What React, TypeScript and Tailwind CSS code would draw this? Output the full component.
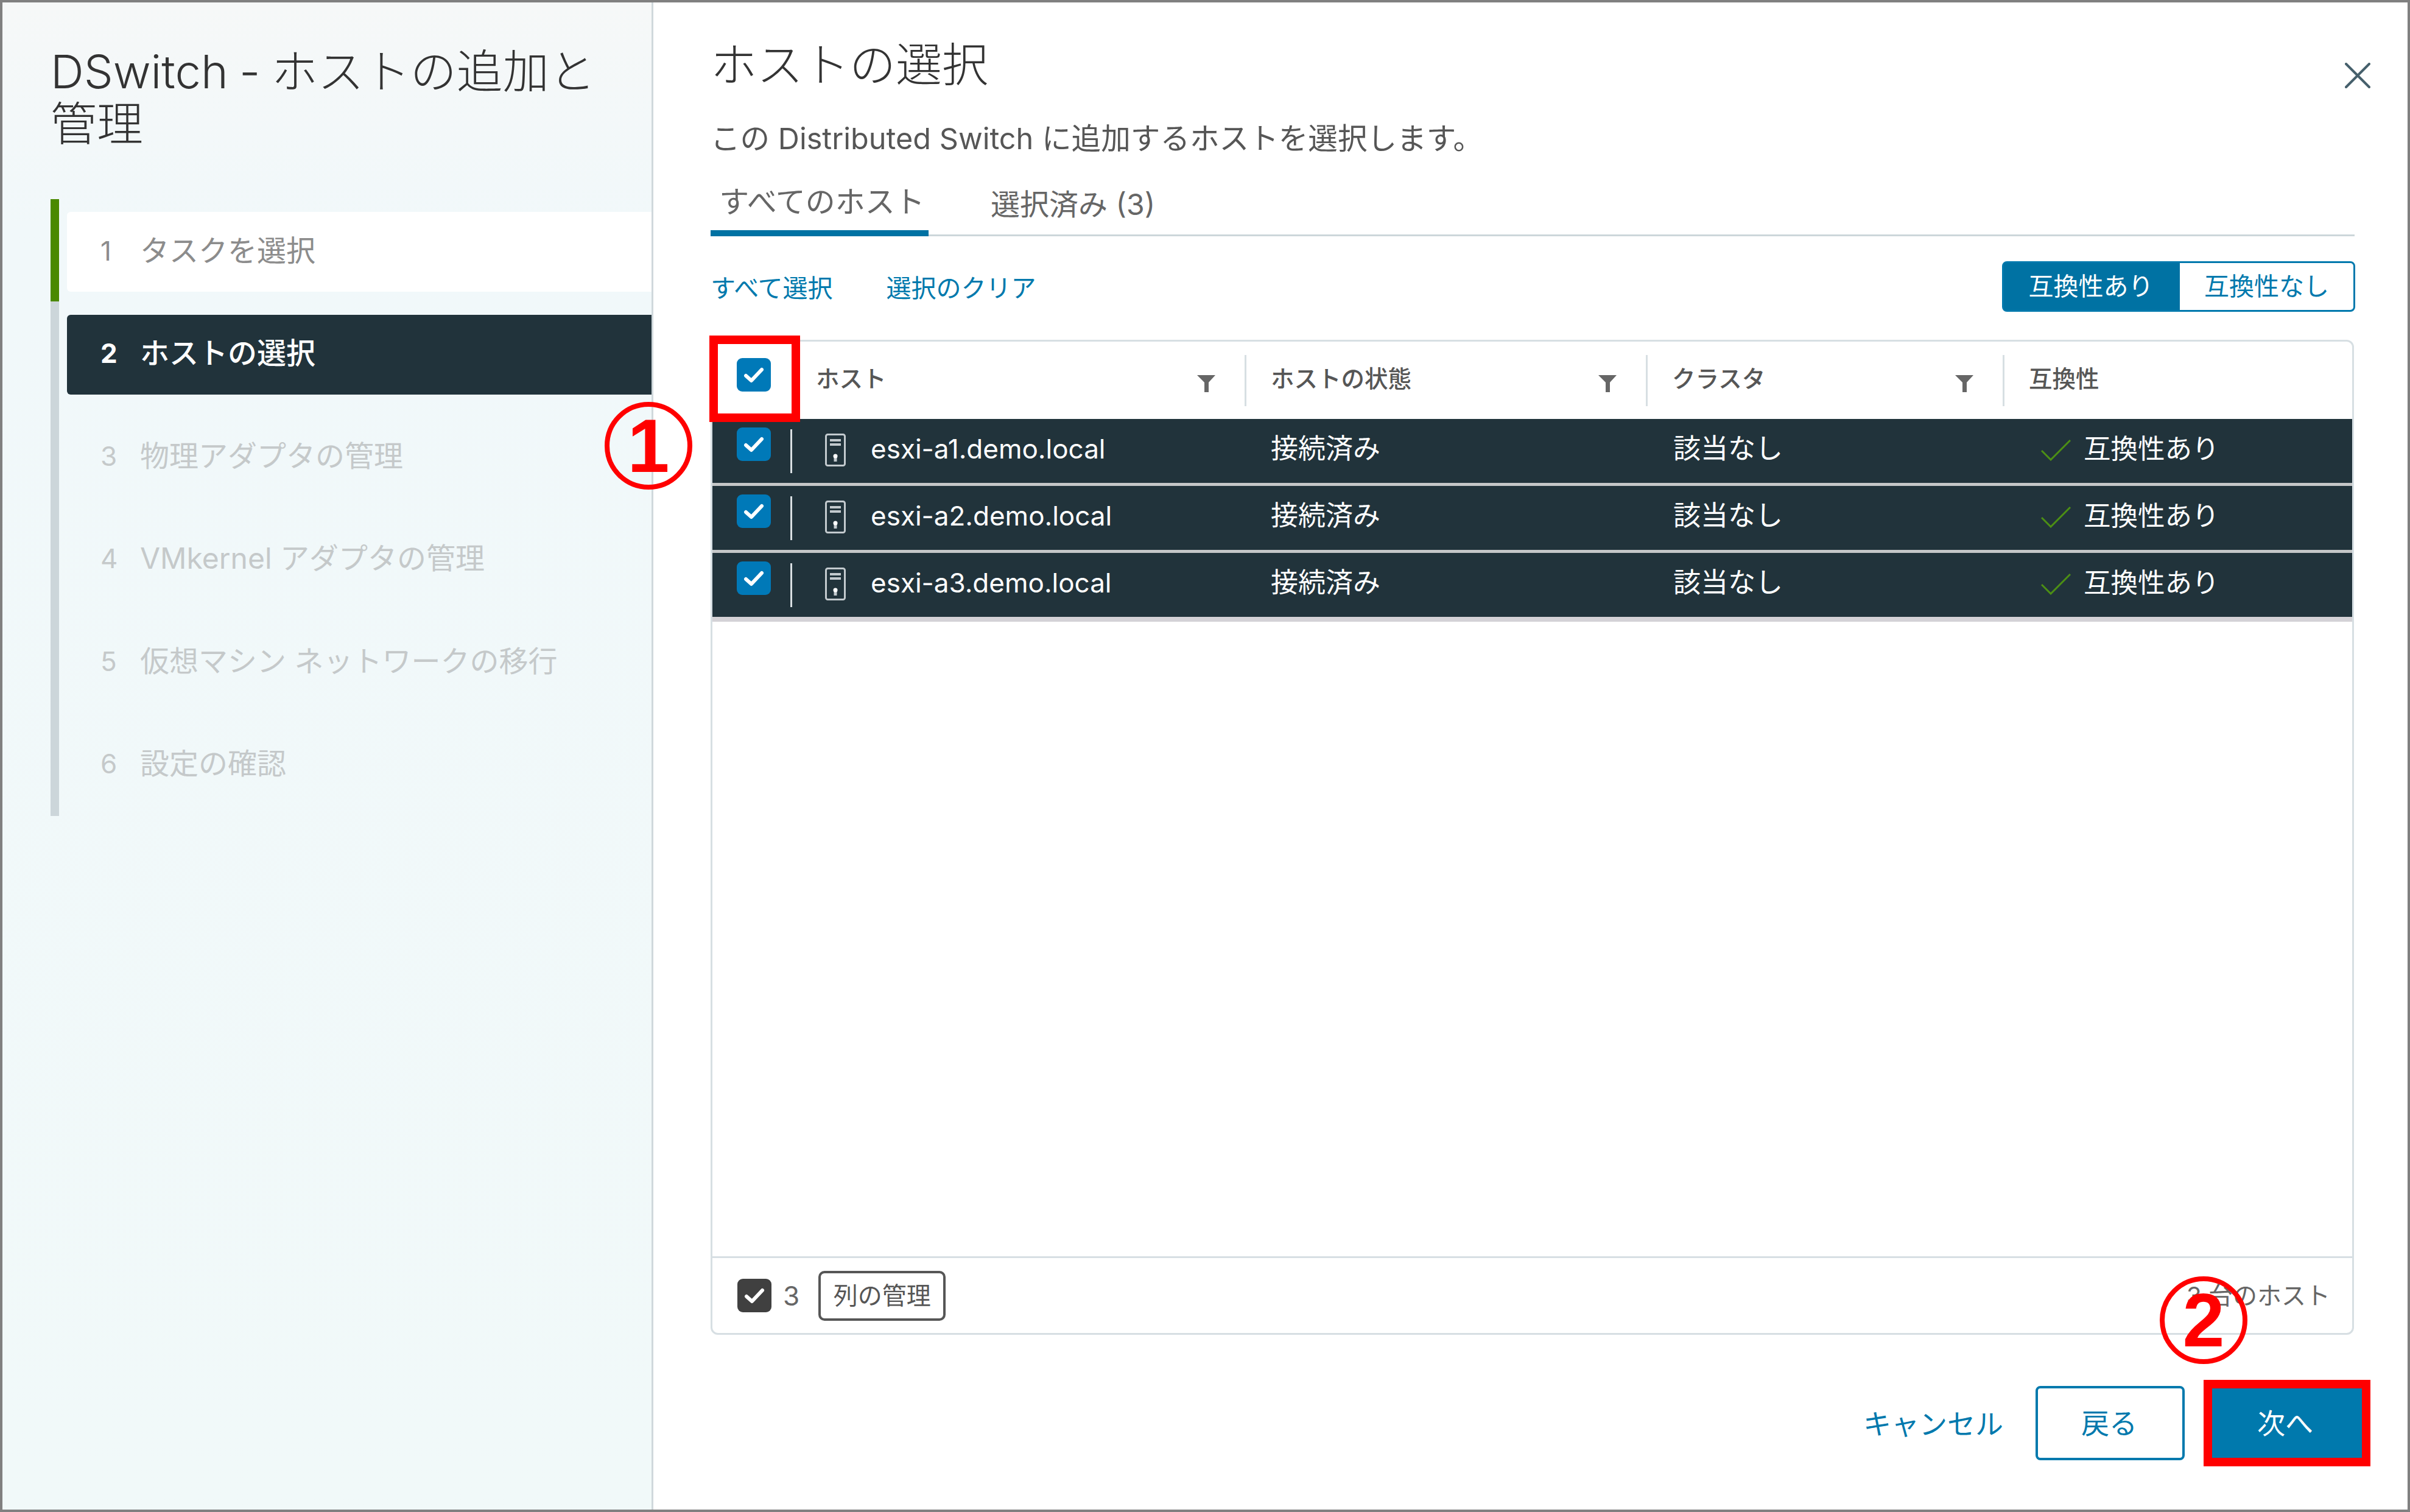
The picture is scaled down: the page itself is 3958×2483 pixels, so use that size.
import React from 'react';

const steps = [
  { n: '1', label: 'タスクを選択', state: 'done' },
  { n: '2', label: 'ホストの選択', state: 'active' },
  { n: '3', label: '物理アダプタの管理', state: 'todo' },
  { n: '4', label: 'VMkernel アダプタの管理', state: 'todo' },
  { n: '5', label: '仮想マシン ネットワークの移行', state: 'todo' },
  { n: '6', label: '設定の確認', state: 'todo' },
];

const hosts = ['esxi-a1.demo.local', 'esxi-a2.demo.local', 'esxi-a3.demo.local'];

const CheckBox = ({ dark = false }: { dark?: boolean }) => (
  <span className={`flex h-[55px] w-[56px] shrink-0 items-center justify-center rounded-[9px] ${dark ? 'bg-[#404040]' : 'bg-[#0079b8]'}`}>
    <svg viewBox="0 0 34 28" className="h-[28px] w-[34px]" fill="none" stroke="#ffffff" strokeWidth="6" strokeLinecap="round" strokeLinejoin="round">
      <path d="M4 15 L13 23 L30 5" />
    </svg>
  </span>
);

const FilterIcon = () => (
  <svg viewBox="0 0 30 28" className="h-[28px] w-[30px]" fill="#666666">
    <path d="M0 0 H30 L19 12 V28 H12 V12 Z" />
  </svg>
);

const ServerIcon = () => (
  <svg viewBox="0 0 34 54" className="h-[54px] w-[34px] shrink-0" fill="none" stroke="#c3cace" strokeWidth="3">
    <rect x="1.5" y="1.5" width="31" height="51" rx="3" />
    <path d="M8 11 H26 M8 18 H26" strokeWidth="4" />
    <path d="M17 46 V37" strokeWidth="5" />
    <circle cx="17" cy="37" r="3.5" fill="#ffffff" stroke="none" />
  </svg>
);

const HeaderCell = ({ label, filter, first }: { label: string; filter?: boolean; first?: boolean }) => (
  <div className={`flex h-[84px] items-center justify-between text-[38.5px] font-medium text-[#565656] ${first ? 'pr-[48px]' : 'border-l-[3px] border-[#d7dfe3] pl-[40px] pr-[48px]'}`}>
    <span className="pb-[4px]">{label}</span>
    {filter && <span className="mt-[10px]"><FilterIcon /></span>}
  </div>
);

const App: React.FC = () => {
  return (
    <div className="relative h-[2483px] w-[3958px] overflow-hidden bg-white font-['Inter','Noto_Sans_CJK_JP',sans-serif]">
      <div className="flex h-full w-full border-[4px] border-[#808080]">
        {/* Left wizard steps */}
        <aside className="flex h-full w-[1069px] shrink-0 flex-col border-r-[3px] border-[#d0d8dc] bg-gradient-to-b from-[#f6f8f8] via-[#f1f8fa] via-[15%] to-[#f1f9f9] pl-[79px] pt-[70px]">
          <h1 className="text-[76px] font-light leading-[86px] text-[#333333] [word-spacing:-3px]">DSwitch - ホストの追加と<br />管理</h1>
          <div className="mt-[81px] flex h-[1013px]">
            <div className="flex w-[14px] shrink-0 flex-col bg-[#ccd6da]">
              <div className="h-[168px] bg-[#4a8900]" />
            </div>
            <ol className="ml-[13px] flex flex-1 flex-col gap-[37.6px] pt-[21px]">
              {steps.map((s) => (
                <li
                  key={s.n}
                  className={`flex h-[131px] items-center rounded-l-[6px] pb-[4px] pl-[55px] text-[48px] ${
                    s.state === 'active'
                      ? 'bg-[#21333b] font-bold text-white'
                      : s.state === 'done'
                        ? 'bg-white text-[#8c8c8c]'
                        : 'text-[#c5c9ca]'
                  }`}
                >
                  <span className="w-[65px] shrink-0 text-[44px]">{s.n}</span>
                  <span className={s.state === 'active' ? 'font-medium' : ''}>{s.label}</span>
                </li>
              ))}
            </ol>
          </div>
        </aside>

        {/* Right content */}
        <main className="flex min-w-0 flex-1 flex-col pb-[71px] pl-[94px]">
          <div className="flex items-start justify-between pr-[61px] pt-[59px]">
            <h2 className="text-[76px] font-light leading-[86px] text-[#333333]">ホストの選択</h2>
            <svg viewBox="0 0 42 42" className="mt-[40px] h-[42px] w-[42px]" stroke="#46606c" strokeWidth="4" strokeLinecap="round">
              <path d="M2 2 L40 40 M40 2 L2 40" />
            </svg>
          </div>

          <p className="mt-[49px] text-[48.6px] leading-[60px] text-[#565656]">この Distributed Switch に追加するホストを選択します。</p>

          <div className="mr-[87px] mt-[32px] flex h-[98px] gap-[102px] border-b-[3px] border-[#ccd6da] text-[49px] text-[#666666]">
            <div className="-mb-[3px] flex h-[98px] w-[358px] items-center justify-center border-b-[10px] border-[#0072a3] pb-[4px] pl-[8px]">すべてのホスト</div>
            <div className="flex h-[95px] items-center pb-[4px] text-[48px]">選択済み (3)</div>
          </div>

          <div className="mr-[86px] mt-[41px] flex h-[83px] items-center justify-between">
            <div className="flex gap-[88px] pt-[6px] text-[41px] text-[#0079ad]">
              <span>すべて選択</span>
              <span>選択のクリア</span>
            </div>
            <div className="flex h-full w-[580px] rounded-[8px] border-[3px] border-[#0079ad] text-[41px]">
              <div className="flex w-[289px] items-center justify-center bg-[#0072a3] pr-[3px] text-white">互換性あり</div>
              <div className="flex flex-1 items-center justify-center text-[#0079ad]">互換性なし</div>
            </div>
          </div>

          <section className="mr-[88px] mt-[46px] flex min-h-0 flex-1 flex-col rounded-[12px] border-[3px] border-[#d7dfe3]">
            <div className="grid h-[127px] shrink-0 grid-cols-[874px_659px_586px_1fr] items-center">
              <div className="flex items-center">
                <div className="mb-[18px] ml-[40px] mr-[74px]"><CheckBox /></div>
                <div className="flex-1"><HeaderCell label="ホスト" filter first /></div>
              </div>
              <HeaderCell label="ホストの状態" filter />
              <HeaderCell label="クラスタ" filter />
              <HeaderCell label="互換性" />
            </div>

            <div className="flex shrink-0 flex-col gap-[5px] border-b-[8px] border-[#d4d2d6] bg-[#c5c7c8]">
              {hosts.map((h) => (
                <div key={h} className="grid h-[105px] shrink-0 grid-cols-[917px_661px_604px_1fr] bg-[#21333b] text-[45px] text-white">
                  <div className="flex">
                    <div className="ml-[40px] mt-[14px]"><CheckBox /></div>
                    <div className="ml-[32px] mt-[17px] h-[72px] w-[3px] bg-[#d9dfe2]" />
                    <div className="ml-[54px] mt-[24px]"><ServerIcon /></div>
                    <span className="ml-[41px] mt-[21px] text-[44px] leading-[56px]">{h}</span>
                  </div>
                  <div className="pt-[21px] leading-[56px]">接続済み</div>
                  <div className="pt-[21px] leading-[56px]">該当なし</div>
                  <div className="flex pt-[21px] text-[44.5px] leading-[56px]">
                    <svg viewBox="0 0 49 35" className="mr-[21px] mt-[13px] h-[35px] w-[49px]" fill="none" stroke="#4c8f14" strokeWidth="3">
                      <path d="M1 18 L16 33 L48 1" />
                    </svg>
                    互換性あり
                  </div>
                </div>
              ))}
            </div>
            <div className="flex-1" />

            <div className="flex h-[126px] shrink-0 items-center justify-between border-t-[3px] border-[#d7dfe3] pl-[41px] pr-[36px]">
              <div className="flex items-center">
                <CheckBox dark />
                <span className="ml-[19px] text-[44px] text-[#666666]">3</span>
                <button className="ml-[31px] flex h-[82px] w-[209px] items-center justify-center rounded-[10px] border-[4px] border-[#565656] text-[40px] text-[#565656]">列の管理</button>
              </div>
              <span className="text-[40px] text-[#666666]">3 台のホスト</span>
            </div>
          </section>

          <div className="mt-[74px] flex h-[142px] shrink-0 items-center justify-end pr-[61px]">
            <button className="mr-[53px] pt-[2px] text-[46px] text-[#0079ad]">キャンセル</button>
            <button className="mr-[31px] h-[122px] w-[245px] rounded-[8px] border-[4px] border-[#0079ad] pr-[3px] text-[46px] text-[#0079ad]">戻る</button>
            <button className="h-[142px] w-[274px] border-[14px] border-[#ff0000] bg-[#0079ad] pr-[6px] text-[46px] text-white">次へ</button>
          </div>
        </main>
      </div>

      {/* Red callouts on top of the screenshot */}
      <div className="absolute left-[1165px] top-[551px] h-[142px] w-[149px] border-[14px] border-[#ff0000]" />
      <div className="absolute left-[993px] top-[660px] flex h-[144px] w-[144px] items-center justify-center rounded-full border-[8px] border-[#ff0000] font-['Liberation_Sans',sans-serif] text-[124px] font-bold leading-none text-[#ff0000]">1</div>
      <div className="absolute left-[3547px] top-[2096px] flex h-[144px] w-[144px] items-center justify-center rounded-full border-[8px] border-[#ff0000] font-['Liberation_Sans',sans-serif] text-[124px] font-bold leading-none text-[#ff0000]">2</div>
    </div>
  );
};

export default App;
